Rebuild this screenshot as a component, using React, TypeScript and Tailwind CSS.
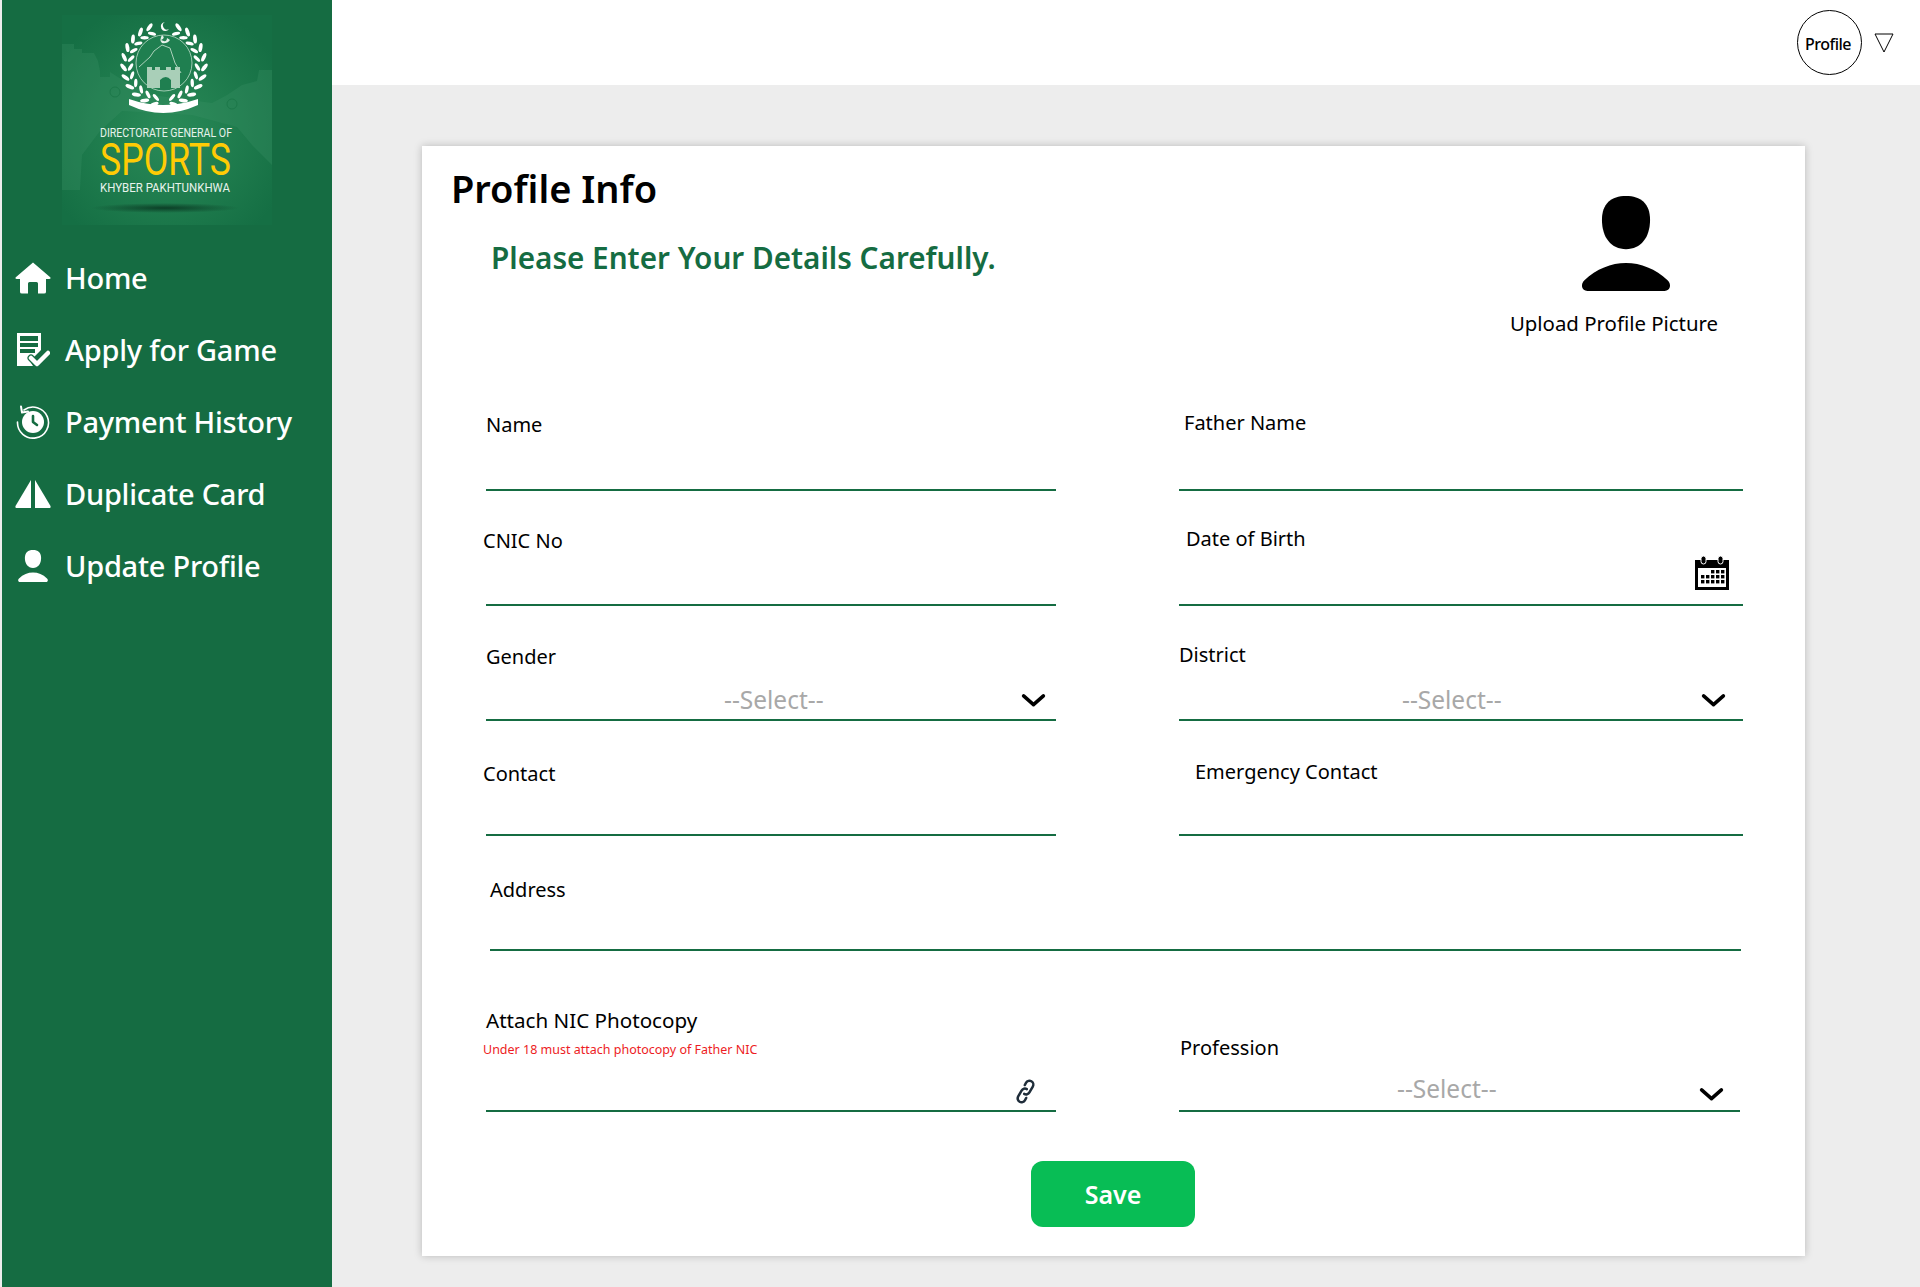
import React from "react";

const font = "font-['Noto_Sans','Open_Sans',sans-serif]";

function Logo() {
  const leaves: React.ReactNode[] = [];
  for (let i = 0; i < 11; i++) {
    const th = ((14 + i * 14.5) * Math.PI) / 180;
    for (const s of [-1, 1]) {
      const dir = Math.atan2(-Math.sin(th), s * Math.cos(th));
      const dirDeg = (dir * 180) / Math.PI;
      const rOut = 40.5;
      const rIn = 33.5;
      const ox = 102 + s * rOut * Math.sin(th);
      const oy = 50 + rOut * Math.cos(th);
      const ix = 102 + s * rIn * Math.sin(th);
      const iy = 50 + rIn * Math.cos(th);
      leaves.push(<ellipse key={`o${i}${s}`} cx={ox} cy={oy} rx="4.6" ry="1.9" fill="#fff" transform={`rotate(${dirDeg - s * -35} ${ox} ${oy})`} />);
      leaves.push(<ellipse key={`n${i}${s}`} cx={ix} cy={iy} rx="4.2" ry="1.7" fill="#fff" transform={`rotate(${dirDeg - s * 35} ${ix} ${iy})`} />);
    }
  }
  return (
    <svg viewBox="0 0 210 210" className="block h-[210px] w-[210px]" role="img" aria-label="Directorate General of Sports">
      <defs>
        <radialGradient id="lg" cx="50%" cy="55%" r="62%">
          <stop offset="0%" stopColor="#2a8b58" />
          <stop offset="100%" stopColor="#156f44" />
        </radialGradient>
        <radialGradient id="sh">
          <stop offset="0%" stopColor="#0c3f27" />
          <stop offset="100%" stopColor="#0c3f27" stopOpacity="0" />
        </radialGradient>
      </defs>
      <rect width="210" height="210" fill="url(#lg)" />
      <path d="M0 29 L12 29 L12 34 L20 34 L20 38 L32 38 L36 46 L38 56 L38 62 L48 62 L48 57 L62 66 L90 80 L150 88 L165 80 L180 70 L195 66 L197 55 L210 55 L210 150 L190 130 L175 112 L130 100 L60 96 L38 116 L20 140 L18 175 L0 175Z" fill="#3a9166" opacity="0.3" />
      <circle cx="53" cy="77" r="5" fill="none" stroke="#1c7849" strokeWidth="1" />
      <circle cx="170" cy="89" r="5" fill="none" stroke="#1c7849" strokeWidth="1" />
      {leaves}
      <circle cx="102" cy="48" r="28" fill="#1f7f50" stroke="#d5ebdd" strokeWidth="0.7" />
      <path d="M77 52 L88 42 L92 36 L100 30 L108 33 L113 48 L119 58" fill="none" stroke="#cfe6d6" strokeWidth="0.8" />
      <path d="M85 52 h5 v3 h3 v-3 h5 v3 h6 v-3 h5 v3 h4 v-3 h5 v21 h-9 v-8 q-5 -6 -11 0 v8 h-13z" fill="#a9cfb8" />
      <path d="M100 20 q4 3 -1 5 q6 3 6 -2 l3 2 q-3 4 -8 3 q-3 -3 0 -8z" fill="#e5f1e9" />
      <path d="M103 7 a4.5 4.5 0 1 0 4 7 a4 4 0 1 1 -4 -7z" fill="#fff" />
      <path d="M67 84 Q101 96 136 84 L136 90 Q101 106 67 90Z" fill="#fff" />
      <text x="38" y="122" fontFamily="Roboto, sans-serif" fontSize="13.5" fill="#e8f3ec" textLength="132" lengthAdjust="spacingAndGlyphs">DIRECTORATE GENERAL OF</text>
      <text x="38" y="160" fontFamily="Roboto, sans-serif" fontSize="44" fill="#ffcb05" textLength="131" lengthAdjust="spacingAndGlyphs">SPORTS</text>
      <text x="38" y="177" fontFamily="Roboto, sans-serif" fontSize="13.5" fill="#e8f3ec" textLength="130" lengthAdjust="spacingAndGlyphs">KHYBER PAKHTUNKHWA</text>
      <ellipse cx="103" cy="193" rx="74" ry="5" fill="url(#sh)" />
    </svg>
  );
}

const HomeI = () => (
  <svg viewBox="0 0 36 32" className="h-[32px] w-[36px]" fill="#fff"><path d="M18 0.5 L35.5 15.5 Q36 17 34 17 L31 17 L31 30 Q31 31.5 29 31.5 L23 31.5 L23 21.5 Q23 20 21.5 20 L14.5 20 Q13 20 13 21.5 L13 31.5 L7 31.5 Q5 31.5 5 30 L5 17 L2 17 Q0 17 0.5 15.5Z" /></svg>
);
const ApplyI = () => (
  <svg viewBox="0 0 34 34" className="h-[34px] w-[34px]" fill="#fff">
    <path fillRule="evenodd" d="M1 0 H25 V17 L14 28 L17 33 H1Z M4 3 V8 H22 V3Z M4 10 V14 H22 V10Z M4 16 V20 H19 V16Z" />
    <circle cx="6" cy="5.5" r="1.6" fill="#156c42" /><circle cx="6" cy="12" r="1.6" fill="#156c42" /><circle cx="6" cy="18" r="1.6" fill="#156c42" />
    <path d="M15 25 L21 31 L32 20" fill="none" stroke="#156c42" strokeWidth="7" strokeLinecap="round" strokeLinejoin="round" />
    <path d="M15 25 L21 31 L32 20" fill="none" stroke="#fff" strokeWidth="4.5" strokeLinecap="round" strokeLinejoin="round" />
  </svg>
);
const HistoryI = () => (
  <svg viewBox="0 0 34 34" className="h-[34px] w-[34px]" fill="none">
    <circle cx="17" cy="17" r="11" fill="#fff" />
    <path d="M17 11 V17 L21 20" stroke="#156c42" strokeWidth="2.6" strokeLinecap="round" strokeLinejoin="round" />
    <path d="M8 5 A15.5 15.5 0 1 1 1.5 17" stroke="#fff" strokeWidth="1.6" strokeLinecap="round" />
    <path d="M5 1.5 L6 7.5 L12 6.5" stroke="#fff" strokeWidth="2" strokeLinecap="round" strokeLinejoin="round" />
  </svg>
);
const DupI = () => (
  <svg viewBox="0 0 36 30" className="h-[30px] w-[36px]" fill="#fff">
    <path d="M16 1 L16 29 L1 29 Q0 28.5 0.5 27Z" /><path d="M20 1 L20 29 L35 29 Q36 28.5 35.5 27Z" />
  </svg>
);
const PersonI = ({ c = "h-[32px] w-[30px]" }: { c?: string }) => (
  <svg viewBox="0 0 30 32" className={c} fill="currentColor">
    <path d="M15 0 C10 0 6.9 2.6 6.9 8 C6.9 14 10 17.9 15 17.9 C20 17.9 23.1 14 23.1 8 C23.1 2.6 20 0 15 0Z" />
    <path d="M2 32 C0 32 -0.4 29.6 1 28.4 C5 24.6 10 22.6 15 22.6 C20 22.6 25 24.6 29 28.4 C30.4 29.6 30 32 28 32Z" />
  </svg>
);

const Chevron = () => (
  <svg viewBox="0 0 24 14" className="h-[15px] w-[25px]" fill="none"><path d="M2.5 2.5 L12 11 L21.5 2.5" stroke="#000" strokeWidth="3.4" strokeLinecap="round" strokeLinejoin="round" /></svg>
);
const Calendar = () => (
  <svg viewBox="0 0 34 34" className="h-[34px] w-[34px]">
    <path fillRule="evenodd" d="M0 4 H34 V34 H0Z M3 12 V31 H31 V12Z" fill="#000" />
    <rect x="6" y="0" width="5" height="8" rx="2.5" fill="#000" stroke="#fff" /><rect x="23" y="0" width="5" height="8" rx="2.5" fill="#000" stroke="#fff" />
    {[[16,14],[21,14],[26,14],[6,19],[11,19],[16,19],[21,19],[26,19],[6,24],[11,24],[16,24],[21,24],[26,24]].map(([x,y]) => <rect key={`${x}-${y}`} x={x} y={y} width="3.4" height="3.4" fill="#000" />)}
  </svg>
);
const LinkI = () => (
  <svg viewBox="0 0 24 24" className="h-[23px] w-[23px] -rotate-[15deg]" fill="none" stroke="#1f2d3a" strokeWidth="2.6" strokeLinecap="round">
    <path d="M10 14 a4 4 0 0 0 5.7 0 l5 -5 a4 4 0 0 0 -5.7 -5.7 l-2 2" />
    <path d="M14 10 a4 4 0 0 0 -5.7 0 l-5 5 a4 4 0 0 0 5.7 5.7 l2 -2" />
  </svg>
);

function Field({ label, labelClass, children, className = "h-[115px]" }: { label: React.ReactNode; labelClass: string; children?: React.ReactNode; className?: string }) {
  return (
    <div className={`relative border-b-2 border-[#156c42] ${className}`}>
      <div className={`text-[20px] leading-[24px] text-black ${labelClass}`}>{label}</div>
      {children}
    </div>
  );
}

const Select = ({ textClass, chevClass }: { textClass: string; chevClass: string }) => (
  <>
    <span className={`absolute bottom-[5px] text-[24.5px] leading-[28px] text-[#a8a8a8] ${textClass}`}>--Select--</span>
    <span className={`absolute bottom-[11px] flex ${chevClass}`}><Chevron /></span>
  </>
);

const nav = [
  { t: "Home", I: HomeI },
  { t: "Apply for Game", I: ApplyI },
  { t: "Payment History", I: HistoryI },
  { t: "Duplicate Card", I: DupI },
  { t: "Update Profile", I: PersonI },
];

export default function App() {
  return (
    <div className={`flex h-[1287px] w-[1920px] overflow-hidden bg-[#ededed] ${font}`}>
      <aside className="ml-[2px] w-[330px] shrink-0 bg-[#156c42] text-white">
        <div className="ml-[60px] mt-[15px]"><Logo /></div>
        <nav className="mt-[17px] flex flex-col">
          {nav.map(({ t, I }) => (
            <div key={t} className="flex h-[72px] items-center">
              <span className="flex w-[63px] justify-center pl-[2px] pr-[4px]"><I /></span>
              <span className="text-[29px] font-medium leading-[36px] tracking-[-0.25px]">{t}</span>
            </div>
          ))}
        </nav>
      </aside>
      <div className="flex min-w-0 flex-1 flex-col">
        <header className="flex h-[85px] items-center justify-end bg-white">
          <div className="flex h-[65px] w-[65px] items-center justify-center rounded-full border border-black pr-[3px] pt-[2px] text-[16px] font-medium tracking-[-0.5px] text-black">Profile</div>
          <svg viewBox="0 0 20 20" className="ml-[12px] mr-[26px] h-[20px] w-[20px]" fill="none" stroke="#000" strokeWidth="1"><path d="M1 1 H19 L10 19Z" /></svg>
        </header>
        <main className="ml-[90px] mt-[61px] h-[1110px] w-[1383px] bg-white px-[64px] shadow-[0_0_8px_rgba(0,0,0,0.22)]">
          <div className="relative flex h-[230px] justify-between">
            <div>
              <h1 className="-ml-[35px] mt-[17px] text-[38px] font-semibold leading-[50px] text-black">Profile Info</h1>
              <p className="ml-[5px] mt-[25px] text-[29.7px] font-semibold leading-[40px] text-[#156c42]">Please Enter Your Details Carefully.</p>
            </div>
            <div className="mr-[23px] flex w-[208px] flex-col items-center text-black">
              <div className="ml-[24px] mt-[50px]"><PersonI c="h-[95px] w-[92px]" /></div>
              <div className="mt-[18px] whitespace-nowrap text-[20.4px] leading-[28px]">Upload Profile Picture</div>
            </div>
          </div>
          <div className="grid grid-cols-[570px_564px] gap-x-[123px]">
            <Field label="Name" labelClass="pt-[37px] ml-[0px]" />
            <Field label="Father Name" labelClass="pt-[35px] ml-[5px]" />
            <Field label="CNIC No" labelClass="pt-[38px] -ml-[3px]" />
            <Field label="Date of Birth" labelClass="pt-[36px] ml-[7px]"><span className="absolute bottom-[14px] right-[14px] flex"><Calendar /></span></Field>
            <Field label="Gender" labelClass="pt-[39px]"><Select textClass="left-[238px]" chevClass="right-[10px]" /></Field>
            <Field label="District" labelClass="pt-[37px]"><Select textClass="left-[223px]" chevClass="right-[17px]" /></Field>
            <Field label="Contact" labelClass="pt-[41px] -ml-[3px]" />
            <Field label="Emergency Contact" labelClass="pt-[39px] ml-[16px]" />
          </div>
          <Field label="Address" labelClass="pt-[42px]" className="ml-[4px] h-[115px] w-[1251px]" />
          <div className="grid grid-cols-[570px_561px] gap-x-[123px]">
            <div className="relative h-[161px] border-b-2 border-[#156c42]">
              <div className="pt-[57px] text-[20.6px] leading-[24px] text-black">Attach NIC Photocopy</div>
              <div className="-ml-[3px] mt-[9px] text-[12.5px] leading-[18px] text-[#ed1c24]">Under 18 must attach photocopy of Father NIC</div>
              <span className="absolute bottom-[7px] right-[19px] flex"><LinkI /></span>
            </div>
            <div className="relative h-[161px] border-b-2 border-[#156c42]">
              <div className="ml-[1px] pt-[85px] text-[20px] leading-[24px] text-black">Profession</div>
              <span className="absolute bottom-[7px] left-[218px] text-[24.5px] leading-[28px] text-[#a8a8a8]">--Select--</span>
              <span className="absolute bottom-[8px] right-[16px] flex"><Chevron /></span>
            </div>
          </div>
          <div className="ml-[545px] mt-[49px] flex h-[66px] w-[164px] items-center justify-center rounded-[12px] bg-[#08bd55] pt-[2px] text-[25px] font-semibold text-white">Save</div>
        </main>
      </div>
    </div>
  );
}
